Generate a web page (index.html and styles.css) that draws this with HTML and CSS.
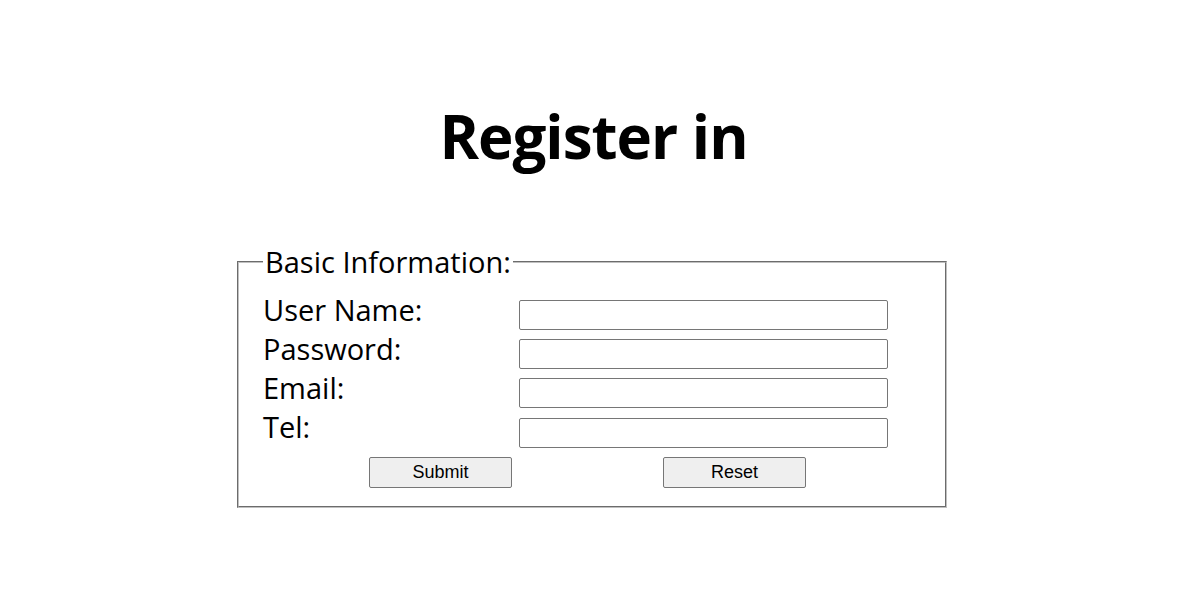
FILE: index.html
```html
<!DOCTYPE html>
<html>
<head>
<meta charset="utf-8">
<link rel="stylesheet" href="styles.css">
</head>
<body>
<h1 class="title">Register in</h1>
<form class="form">
  <fieldset class="box">
    <legend class="legend">Basic Information:</legend>
    <div class="grid">
      <label class="label">User Name:</label><input class="field" type="text">
      <label class="label">Password:</label><input class="field" type="password">
      <label class="label">Email:</label><input class="field" type="text">
      <label class="label">Tel:</label><input class="field" type="text">
    </div>
    <div class="buttons">
      <button type="button" class="btn">Submit</button>
      <button type="button" class="btn">Reset</button>
    </div>
  </fieldset>
</form>
</body>
</html>
```
FILE: styles.css
```css
html, body { margin: 0; padding: 0; background: #fff; }
body { font-family: "Open Sans", "Noto Sans", sans-serif; color: #000; }
.title {
  margin: 92px 0 0;
  text-align: center;
  font-size: 60px;
  letter-spacing: -1px;
  font-weight: 700;
  line-height: 88px;
}
.form { display: flex; justify-content: center; margin-top: 64px; padding-right: 3px; }
.box {
  width: 710px;
  box-sizing: border-box;
  margin: 0;
  border: 2px groove #c0c0c0;
  padding: 20px 0 18px 24px;
  min-width: 0;
}
.legend {
  font-size: 29px;
  line-height: 36px;
  padding: 0 2px;
  margin-left: 0;
}
.grid {
  display: grid;
  grid-template-columns: 256px 369px;
  row-gap: 9px;
  grid-template-rows: 30px 30px 30px 31px;
  align-items: start;
}
.label { font-size: 29px; line-height: 30px; margin-top: -5px; }
.field {
  box-sizing: border-box;
  width: 369px;
  height: 30px;
  margin: 0;
  border: 1px solid #767676;
  border-radius: 2px;
  background: #fff;
}
.field:last-child { margin-top: 1px; }
.buttons { display: flex; margin-top: 9px; padding-left: 106px; gap: 151px; }
.btn {
  box-sizing: border-box;
  width: 143px;
  height: 31px;
  margin: 0;
  border: 1px solid #767676;
  border-radius: 2px;
  background: #efefef;
  font-family: "Liberation Sans", Arial, sans-serif;
  font-size: 18px;
  color: #000;
  padding: 0;
}
```
